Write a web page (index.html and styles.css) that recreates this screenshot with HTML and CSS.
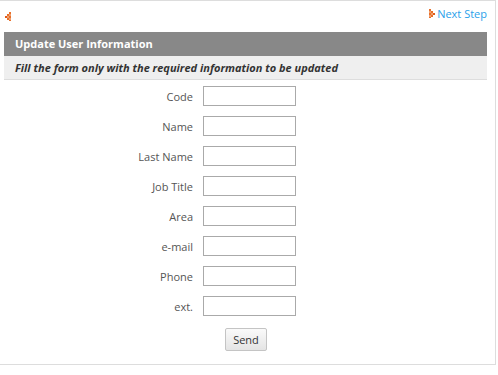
FILE: index.html
```html
<!DOCTYPE html>
<html lang="en">
<head>
    <meta charset="UTF-8">
    <title>Update User Information</title>
    <link rel="stylesheet" href="styles.css">
</head>
<body>
    <div class="panel">
        <div class="nav">
            <a class="back" href="#">
                <svg width="6" height="9" viewBox="0 0 6 9">
                    <rect x="4" y="0" width="2" height="2" fill="#e8702a"/>
                    <rect x="4" y="2" width="2" height="2" fill="#f0a070"/>
                    <rect x="2" y="2" width="2" height="2" fill="#e8702a"/>
                    <rect x="4" y="4" width="2" height="2" fill="#e8702a"/>
                    <rect x="2" y="4" width="2" height="2" fill="#f0a070"/>
                    <rect x="0" y="4" width="2" height="2" fill="#e05a1a"/>
                    <rect x="4" y="6" width="2" height="2" fill="#f0a070"/>
                    <rect x="2" y="6" width="2" height="2" fill="#e8702a"/>
                    <rect x="4" y="8" width="2" height="1" fill="#e8702a"/>
                </svg>
            </a>
            <a class="next" href="#">
                <svg width="6" height="9" viewBox="0 0 6 9">
                    <rect x="0" y="0" width="2" height="2" fill="#e8702a"/>
                    <rect x="0" y="2" width="2" height="2" fill="#f0a070"/>
                    <rect x="2" y="2" width="2" height="2" fill="#e8702a"/>
                    <rect x="0" y="4" width="2" height="2" fill="#e8702a"/>
                    <rect x="2" y="4" width="2" height="2" fill="#f0a070"/>
                    <rect x="4" y="4" width="2" height="2" fill="#e05a1a"/>
                    <rect x="0" y="6" width="2" height="2" fill="#f0a070"/>
                    <rect x="2" y="6" width="2" height="2" fill="#e8702a"/>
                    <rect x="0" y="8" width="2" height="1" fill="#e8702a"/>
                </svg>
                Next Step
            </a>
        </div>

        <div class="box">
            <div class="box-title">Update User Information</div>
            <div class="box-note">Fill the form only with the required information to be updated</div>

            <form class="user-form">
                <label class="field"><span>Code</span><input type="text"></label>
                <label class="field"><span>Name</span><input type="text"></label>
                <label class="field"><span>Last Name</span><input type="text"></label>
                <label class="field"><span>Job Title</span><input type="text"></label>
                <label class="field"><span>Area</span><input type="text"></label>
                <label class="field"><span>e-mail</span><input type="text"></label>
                <label class="field"><span>Phone</span><input type="text"></label>
                <label class="field"><span>ext.</span><input type="text"></label>
                <div class="actions">
                    <button type="button">Send</button>
                </div>
            </form>
        </div>
    </div>
</body>
</html>
```

FILE: styles.css
```css
body {
    margin: 0;
    font-family: 'Open Sans', 'Noto Sans', sans-serif;
    font-size: 11px;
    color: #555;
    background: #fff;
}

.panel {
    width: 495px;
    height: 363px;
    border: 1px solid #ddd;
    border-left: none;
    box-sizing: content-box;
}

.nav {
    height: 31px;
    display: flex;
    justify-content: space-between;
    align-items: flex-start;
    padding: 0 8px 0 5px;
}

.nav a {
    text-decoration: none;
}

.back {
    margin-top: 8px;
}

.next {
    margin-top: 5px;
    display: flex;
    align-items: center;
    gap: 2px;
    color: #2a9fea;
    font-size: 11px;
}

.box {
    margin: 0 8px 0 4px;
}

.box-title {
    background-color: #888;
    color: #fff;
    font-weight: bold;
    font-size: 11px;
    height: 24px;
    line-height: 24px;
    padding-left: 11px;
}

.box-note {
    background-color: #efefef;
    border-bottom: 1px solid #ddd;
    color: #333;
    font-weight: bold;
    font-style: italic;
    height: 23px;
    line-height: 23px;
    padding-left: 11px;
}

.user-form {
    display: flex;
    flex-direction: column;
    align-items: flex-start;
    padding: 6px 0 0 99px;
    gap: 10px;
}

.field {
    display: grid;
    grid-template-columns: 90px 93px;
    column-gap: 10px;
    align-items: center;
}

.field span {
    text-align: right;
    color: #555;
}

.field input {
    height: 20px;
    box-sizing: border-box;
    border: 1px solid #aaa;
    padding: 0 3px;
    font: inherit;
}

.actions {
    margin-top: 2px;
    margin-left: 122px;
}

button {
    font-family: 'Open Sans', 'Noto Sans', sans-serif;
    font-size: 11px;
    color: #333;
    background: linear-gradient(#fafafa, #e4e4e4);
    border: 1px solid #c4c4c4;
    border-radius: 2px;
    width: 42px;
    height: 23px;
    padding: 0;
}
```
